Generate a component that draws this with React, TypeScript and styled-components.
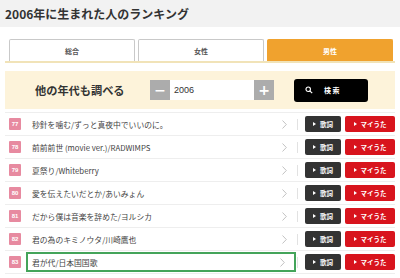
import React from "react";
import styled, { createGlobalStyle } from "styled-components";

const Global = createGlobalStyle`
  html, body { margin: 0; padding: 0; background: #fff; }
  body { font-family: "Noto Sans CJK JP", "Noto Sans", sans-serif; color: #333; width: 400px; overflow: hidden; }
  * { box-sizing: border-box; }
`;

const Header = styled.div`
  height: 27px;
  background: #f2f2f2;
  display: flex;
  align-items: center;
  padding-left: 5px;
  font-size: 12px;
  font-weight: 700;
  color: #333;
`;

const Body = styled.div`
  margin: 0 5px;
  width: 390px;
`;

const Tabs = styled.div`
  margin-top: 12px;
  display: flex;
  gap: 3px;
  padding: 0 2px 0 4px;
  border-bottom: 2px solid #f1e3b8;
`;

const Tab = styled.div<{ $active?: boolean }>`
  flex: 1;
  height: 22px;
  display: flex;
  align-items: center;
  justify-content: center;
  font-size: 7px;
  font-weight: 700;
  border-radius: 2px 2px 0 0;
  border: 1px solid ${(p) => (p.$active ? "#f0a22e" : "#c9c9c9")};
  border-bottom: none;
  background: ${(p) => (p.$active ? "#f0a22e" : "#fff")};
  color: ${(p) => (p.$active ? "#fff" : "#555")};
`;

const SearchBand = styled.div`
  margin-top: 8px;
  height: 38px;
  background: #fdf3da;
  display: flex;
  align-items: center;
  padding-left: 30px;
`;

const SearchLabel = styled.div`
  font-size: 11.2px;
  font-weight: 700;
  color: #333;
  width: 115px;
`;

const Stepper = styled.div`
  display: flex;
  height: 20px;
`;

const StepButton = styled.div`
  width: 20px;
  height: 20px;
  background: #acacac;
  color: #fff;
  display: flex;
  align-items: center;
  justify-content: center;
  font-size: 14px;
  font-weight: 700;
  font-family: "DejaVu Sans", sans-serif;
  line-height: 1;
`;

const YearBox = styled.div`
  width: 84px;
  height: 20px;
  background: #fff;
  display: flex;
  align-items: center;
  padding-left: 4px;
  font-family: "Liberation Sans", sans-serif;
  font-size: 9px;
  color: #333;
`;

const SearchButton = styled.div`
  margin-left: 20px;
  width: 74px;
  height: 23px;
  background: #000;
  border-radius: 3px;
  display: flex;
  align-items: center;
  padding-left: 11px;
  gap: 11px;
  color: #fff;
  font-size: 7px;
  font-weight: 700;
`;

const List = styled.div`
  margin-top: 3px;
  border-top: 1px solid #eee;
`;

const Row = styled.div`
  height: 23px;
  border-bottom: 1px solid #eee;
  display: flex;
  align-items: center;
`;

const Badge = styled.div`
  margin-left: 4px;
  width: 12px;
  height: 12px;
  border-radius: 1px;
  background: #e78aa0;
  color: #fff;
  font-family: "Liberation Sans", sans-serif;
  font-size: 6px;
  font-weight: 700;
  display: flex;
  align-items: center;
  justify-content: center;
`;

const SongLink = styled.div<{ $selected?: boolean }>`
  margin-left: 5px;
  flex: 1;
  height: 20px;
  display: flex;
  align-items: center;
  padding-left: ${(p) => (p.$selected ? "4px" : "6px")};
  padding-right: 9px;
  border: ${(p) => (p.$selected ? "2px solid #44a45a" : "none")};
  font-size: 7.8px;
  color: #444;
`;

const SongTitle = styled.span`
  flex: 1;
  white-space: nowrap;
`;

const Chevron = styled.svg`
  width: 5px;
  height: 9px;
`;

const Divider = styled.div`
  width: 1px;
  height: 11px;
  background: #e2e2e2;
  margin-left: 1px;
`;

const ActionButton = styled.div<{ $red?: boolean; $w: number }>`
  margin-left: ${(p) => (p.$red ? "4px" : "7px")};
  width: ${(p) => p.$w}px;
  height: 16px;
  border-radius: 2px;
  background: ${(p) => (p.$red ? "#d8141d" : "#333")};
  color: #fff;
  font-size: 6.5px;
  font-weight: 700;
  display: flex;
  align-items: center;
  justify-content: center;
  gap: 4px;
`;

const Tri = styled.span`
  width: 0;
  height: 0;
  border-left: 3px solid #fff;
  border-top: 2px solid transparent;
  border-bottom: 2px solid transparent;
`;

const songs = [
  { n: 77, t: "秒針を噛む/ずっと真夜中でいいのに。" },
  { n: 78, t: "前前前世 (movie ver.)/RADWIMPS" },
  { n: 79, t: "夏祭り/Whiteberry" },
  { n: 80, t: "愛を伝えたいだとか/あいみょん" },
  { n: 81, t: "だから僕は音楽を辞めた/ヨルシカ" },
  { n: 82, t: "君の為のキミノウタ/川崎鷹也" },
  { n: 83, t: "君が代/日本国国歌", sel: true },
];

export default function App() {
  return (
    <>
      <Global />
      <Header>2006年に生まれた人のランキング</Header>
      <Body>
        <Tabs>
          <Tab>総合</Tab>
          <Tab>女性</Tab>
          <Tab $active>男性</Tab>
        </Tabs>
        <SearchBand>
          <SearchLabel>他の年代も調べる</SearchLabel>
          <Stepper>
            <StepButton>−</StepButton>
            <YearBox>2006</YearBox>
            <StepButton>+</StepButton>
          </Stepper>
          <SearchButton>
            <svg width="8" height="8" viewBox="0 0 10 10">
              <circle cx="4" cy="4" r="2.8" fill="none" stroke="#fff" strokeWidth="1.4" />
              <line x1="6" y1="6" x2="9" y2="9" stroke="#fff" strokeWidth="1.5" />
            </svg>
            <span>検 索</span>
          </SearchButton>
        </SearchBand>
        <List>
          {songs.map((s) => (
            <Row key={s.n}>
              <Badge>{s.n}</Badge>
              <SongLink $selected={s.sel}>
                <SongTitle>{s.t}</SongTitle>
                <Chevron viewBox="0 0 5 9">
                  <polyline points="0.5,0.5 4.3,4.5 0.5,8.5" fill="none" stroke="#bbb" strokeWidth="0.9" />
                </Chevron>
              </SongLink>
              <Divider />
              <ActionButton $w={36}>
                <Tri />
                歌詞
              </ActionButton>
              <ActionButton $red $w={50}>
                <Tri />
                マイうた
              </ActionButton>
            </Row>
          ))}
        </List>
      </Body>
    </>
  );
}
